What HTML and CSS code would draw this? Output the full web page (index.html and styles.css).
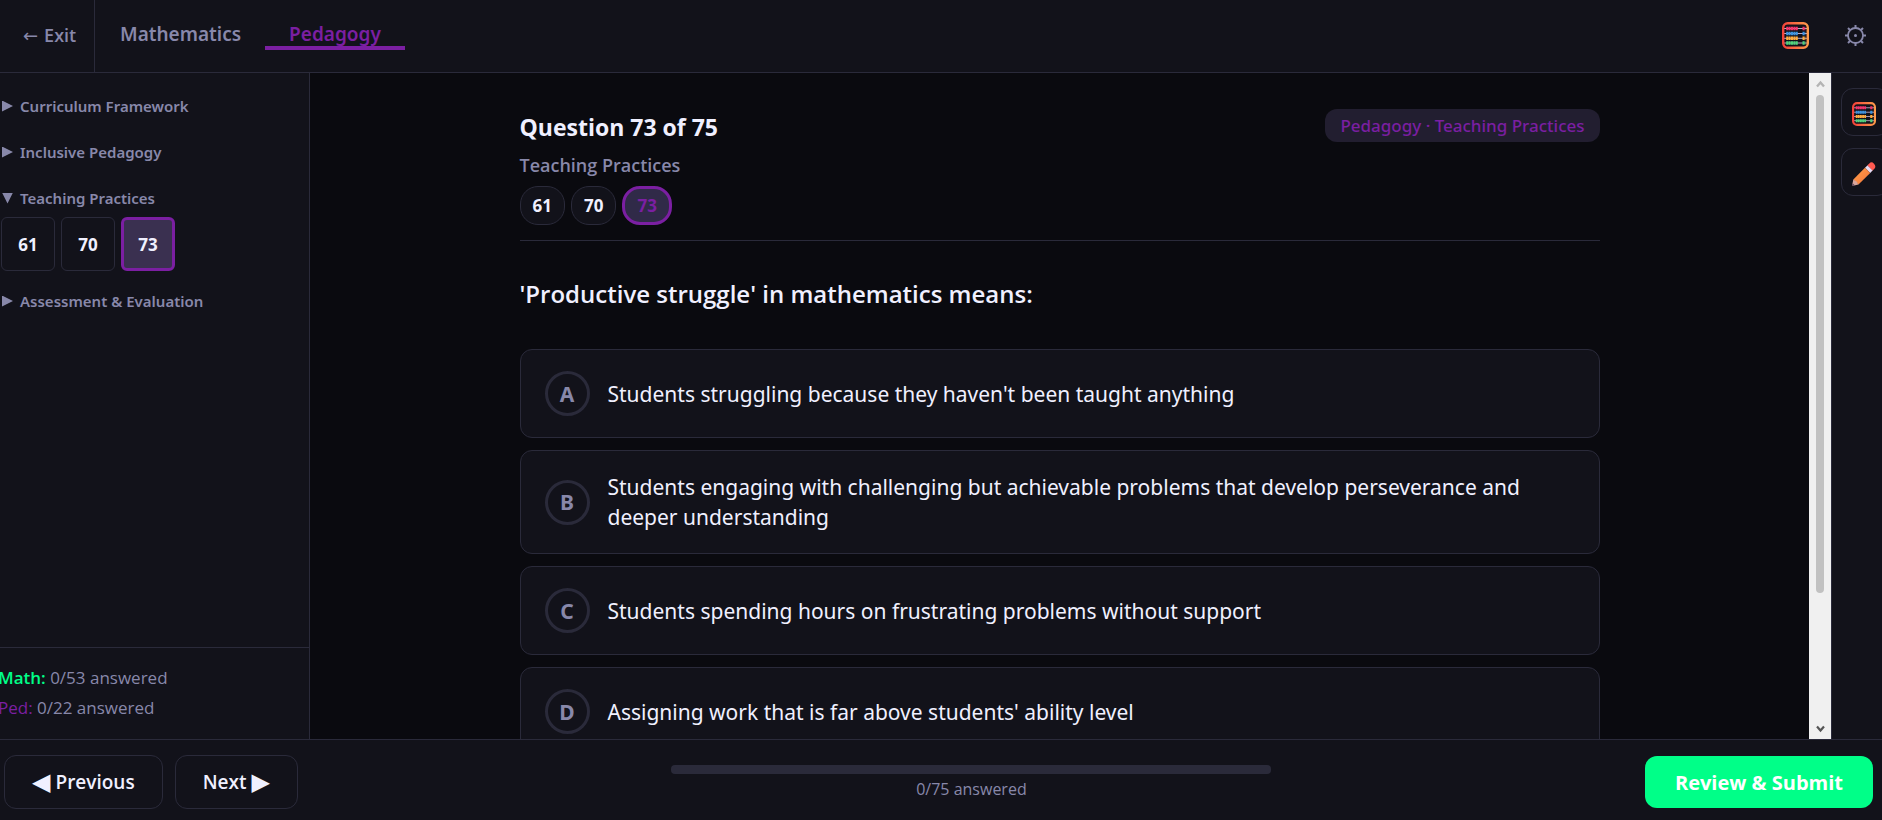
FILE: index.html
```html
<!DOCTYPE html>
<html lang="en">
<head>
    <meta charset="utf-8">
    <meta name="viewport" content="width=device-width, initial-scale=1">
    <title>Practice Test</title>
    <link rel="stylesheet" href="styles.css">
</head>
<body>
<svg class="defs" width="0" height="0" aria-hidden="true">
    <defs>
        <linearGradient id="frame" x1="0" y1="0" x2="1" y2="0">
            <stop offset="0" stop-color="#f4433a"/>
            <stop offset="1" stop-color="#ff9a4a"/>
        </linearGradient>
        <symbol id="abacus" viewBox="0 0 27 27">
            <path d="M2 6.5h23M2 11.5h23M2 16.3h23M2 21h23" stroke="#b9a9c4" stroke-width="1"/>
            <g fill="none" stroke-width="3.4" stroke-dasharray="2.1 .3">
                <path d="M4.2 6.5h11.6M20.5 6.5h2.8" stroke="#f5326b"/>
                <path d="M4.2 11.5h11.6M20.5 11.5h2.8" stroke="#3a94e0"/>
                <path d="M4.2 16.3h11.6M20.5 16.3h2.8" stroke="#ffae3d"/>
                <path d="M4.2 21h11.6M20.5 21h2.8" stroke="#4fd67c"/>
            </g>
            <rect x="1.2" y="1.2" width="24.6" height="24.6" rx="4.5" fill="none" stroke="url(#frame)" stroke-width="2.4"/>
        </symbol>
    </defs>
</svg>

<header class="top-bar">
    <a class="exit" href="#"><span class="back-arrow">←</span> Exit</a>
    <nav class="tabs">
        <a class="tab" href="#">Mathematics</a>
        <a class="tab active" href="#">Pedagogy</a>
    </nav>
    <div class="top-icons">
        <button class="icon-btn" aria-label="Calculator">
            <svg width="27" height="27"><use href="#abacus"/></svg>
        </button>
        <button class="icon-btn" aria-label="Settings">
            <svg width="21" height="21" viewBox="0 0 21 21" fill="none" stroke="#8888aa">
                <circle cx="10.5" cy="10.5" r="7.5" stroke-width="1.8"/>
                <circle cx="10.5" cy="10.5" r="1.5" fill="#8888aa" stroke="none"/>
                <path d="M10.5 0v3M10.5 18v3M0 10.5h3M18 10.5h3M3 3l2.2 2.2M15.8 15.8L18 18M18 3l-2.2 2.2M5.2 15.8L3 18" stroke-width="2"/>
            </svg>
        </button>
    </div>
</header>

<div class="workspace">
    <aside class="sidebar">
        <div class="topics">
            <details>
                <summary>Curriculum Framework</summary>
            </details>
            <details>
                <summary>Inclusive Pedagogy</summary>
            </details>
            <details open>
                <summary>Teaching Practices</summary>
                <div class="question-grid">
                    <button class="question-btn">61</button>
                    <button class="question-btn">70</button>
                    <button class="question-btn current">73</button>
                </div>
            </details>
            <details>
                <summary>Assessment &amp; Evaluation</summary>
            </details>
        </div>
        <div class="summary">
            <div><span class="math">Math:</span> 0/53 answered</div>
            <div><span class="ped">Ped:</span> 0/22 answered</div>
        </div>
    </aside>

    <main class="main">
        <div class="content">
            <div class="question-header">
                <div>
                    <h1>Question 73 of 75</h1>
                    <div class="topic-name">Teaching Practices</div>
                    <div class="chips">
                        <button class="chip">61</button>
                        <button class="chip">70</button>
                        <button class="chip current">73</button>
                    </div>
                </div>
                <span class="badge">Pedagogy · Teaching Practices</span>
            </div>

            <h2>'Productive struggle' in mathematics means:</h2>

            <div class="options">
                <button class="option">
                    <span class="letter">A</span>
                    <span>Students struggling because they haven't been taught anything</span>
                </button>
                <button class="option">
                    <span class="letter">B</span>
                    <span>Students engaging with challenging but achievable problems that develop perseverance and deeper understanding</span>
                </button>
                <button class="option">
                    <span class="letter">C</span>
                    <span>Students spending hours on frustrating problems without support</span>
                </button>
                <button class="option">
                    <span class="letter">D</span>
                    <span>Assigning work that is far above students' ability level</span>
                </button>
            </div>
        </div>
    </main>

    <div class="scrollbar" aria-hidden="true">
        <svg width="22" height="22" viewBox="0 0 22 22" fill="none" stroke="#b4b4b4" stroke-width="2.4"><path d="M8 13.5l3.5-4 3.5 4"/></svg>
        <div class="track"><div class="thumb"></div></div>
        <svg width="22" height="22" viewBox="0 0 22 22" fill="none" stroke="#555" stroke-width="2.2"><path d="M8 9.5l3.5 4 3.5-4"/></svg>
    </div>

    <aside class="tools">
        <button class="tool-btn" aria-label="Calculator">
            <svg width="24" height="24"><use href="#abacus"/></svg>
        </button>
        <button class="tool-btn" aria-label="Scratchpad">
            <svg width="24" height="24" viewBox="0 0 24 24">
                <defs>
                    <linearGradient id="wood" x1="0" y1="0" x2="1" y2="1">
                        <stop offset="0" stop-color="#ffa04a"/>
                        <stop offset="1" stop-color="#f4733a"/>
                    </linearGradient>
                </defs>
                <path d="M17.3 1.5q2.2-2.4 4.7.2t.4 5l-2 2-5.2-5.2z" fill="#ff5a50"/>
                <path d="M15.4 3.4l5.2 5.2-2.4 2.4L13 5.8z" fill="#e6dcf5"/>
                <path d="M13 5.8l5.2 5.2L6.5 22.6l-5.2-5.2z" fill="url(#wood)"/>
                <path d="M1.3 17.4L.2 23q0 .8.8.7l5.5-1.1-2-3z" fill="#d9a59a"/>
                <path d="M.6 21.2L.2 23q0 .8.8.7l1.8-.4z" fill="#5a4660"/>
            </svg>
        </button>
    </aside>
</div>

<footer class="bottom-bar">
    <div class="nav-buttons">
        <button class="nav-btn"><span class="arrow">◀</span>Previous</button>
        <button class="nav-btn">Next<span class="arrow">▶</span></button>
    </div>
    <div class="progress">
        <progress id="answered" value="0" max="75"></progress>
        <label for="answered">0/75 answered</label>
    </div>
    <button class="submit-btn">Review &amp; Submit</button>
</footer>
</body>
</html>
```
FILE: styles.css
```css
* {
    box-sizing: border-box;
}

body {
    margin: 0;
    height: 100vh;
    display: flex;
    flex-direction: column;
    overflow: hidden;
    background: #0a0a0f;
    color: #f0f0ff;
    font-family: "Open Sans", "Noto Sans", sans-serif;
    font-size: 17px;
}

button {
    font-family: inherit;
    color: inherit;
    background: none;
    border: none;
    padding: 0;
    cursor: pointer;
}

a {
    text-decoration: none;
}

svg {
    display: block;
}

.defs {
    position: absolute;
}

/* top bar */

.top-bar {
    display: flex;
    align-items: center;
    flex-shrink: 0;
    height: 73px;
    background: #12121a;
    border-bottom: 1px solid #2a2a3a;
    color: #8888aa;
}

.exit {
    display: flex;
    align-items: center;
    align-self: stretch;
    gap: 6px;
    width: 95px;
    padding: 0 0 2px 23px;
    border-right: 1px solid #2a2a3a;
    color: #8888aa;
    font-size: 18px;
    font-weight: 600;
    white-space: nowrap;
}

.back-arrow {
    font-family: "DejaVu Sans", sans-serif;
    font-weight: 400;
}

.tabs {
    display: flex;
    margin-left: 1px;
}

.tab {
    padding: 0 24px;
    border-bottom: 4px solid transparent;
    color: #8888aa;
    font-family: "Noto Sans", sans-serif;
    font-size: 19px;
    font-weight: 600;
    line-height: 24px;
}

.tab.active {
    color: #7b1fa2;
    border-bottom-color: #7b1fa2;
}

.top-icons {
    display: flex;
    gap: 12px;
    margin-left: auto;
    padding: 0 3px 2px 0;
}

.icon-btn {
    display: flex;
    align-items: center;
    justify-content: center;
    width: 48px;
    height: 48px;
}

/* workspace */

.workspace {
    display: flex;
    flex: 1;
    min-height: 0;
}

.sidebar {
    display: flex;
    flex-direction: column;
    flex-shrink: 0;
    width: 310px;
    background: #12121a;
    border-right: 1px solid #2a2a3a;
    color: #8888aa;
}

.topics {
    flex: 1;
    padding-top: 10px;
}

summary {
    display: flex;
    align-items: center;
    gap: 7px;
    padding-left: 2px;
    height: 46px;
    font-family: "Noto Sans", sans-serif;
    font-size: 15px;
    font-weight: 600;
    cursor: pointer;
}

summary::before {
    content: "";
    width: 11px;
    height: 11px;
    background: #8888aa;
    clip-path: polygon(0 0, 100% 50%, 0 100%);
}

details[open] summary::before {
    clip-path: polygon(0 0, 100% 0, 50% 100%);
}

details[open] summary {
    height: 42px;
    padding-top: 4px;
}

.question-grid {
    display: flex;
    gap: 6px;
    padding: 0 0 7px 1px;
}

.question-btn {
    width: 54px;
    height: 54px;
    border: 1px solid #2a2a3a;
    border-radius: 6px;
    color: #f0f0ff;
    font-size: 17px;
    font-weight: 700;
}

.question-btn.current {
    background: #3a3050;
    border: 3px solid #7b1fa2;
}

.summary {
    margin-left: -2px;
    padding: 15px 0 16px;
    border-top: 1px solid #2a2a3a;
    line-height: 30px;
}

.math {
    color: #00ff88;
    font-weight: 600;
}

.ped {
    color: #7b1fa2;
}

/* question */

.main {
    flex: 1;
    min-width: 0;
    overflow: hidden;
}

.content {
    max-width: 1080px;
    margin: 0 auto;
    padding-top: 36px;
}

.question-header {
    display: flex;
    justify-content: space-between;
    align-items: flex-start;
    padding-bottom: 15px;
    border-bottom: 1px solid #2a2a3a;
}

h1 {
    margin: 0 0 2px;
    font-size: 23px;
    font-weight: 700;
    line-height: 36px;
}

.topic-name {
    color: #8888aa;
    font-size: 18px;
    font-weight: 600;
    line-height: 36px;
}

.chips {
    display: flex;
    gap: 6px;
    margin-top: 3px;
}

.chip {
    height: 39px;
    padding: 0 12px;
    background: #12121a;
    border: 1px solid #2a2a3a;
    border-radius: 18px;
    font-size: 17px;
    font-weight: 700;
}

.chip.current {
    background: #302a48;
    border: 3px solid #7b1fa2;
    color: #7b1fa2;
}

.badge {
    padding: 0 15px;
    background: #221e30;
    border-radius: 12px;
    color: #7b1fa2;
    font-family: "Noto Sans", sans-serif;
    font-size: 17px;
    font-weight: 500;
    line-height: 33px;
}

h2 {
    margin: 35px 0 37px;
    font-size: 24px;
    font-weight: 600;
    line-height: 36px;
}

.options {
    display: flex;
    flex-direction: column;
    gap: 12px;
}

.option {
    display: flex;
    align-items: center;
    gap: 18px;
    padding: 21px 24px;
    background: #12121a;
    border: 1px solid #2a2a3a;
    border-radius: 12px;
    font-family: "Noto Sans", sans-serif;
    font-size: 21px;
    line-height: 30px;
    text-align: left;
}

.letter {
    display: flex;
    align-items: center;
    justify-content: center;
    flex-shrink: 0;
    width: 45px;
    height: 45px;
    border: 3px solid #2a2a3a;
    border-radius: 50%;
    color: #8888aa;
    font-weight: 700;
}

/* scrollbar */

.scrollbar {
    display: flex;
    flex-direction: column;
    flex-shrink: 0;
    width: 22px;
    background: #f0f0f0;
}

.track {
    flex: 1;
}

.thumb {
    width: 8px;
    height: 80%;
    margin: 0 auto;
    background: #c1c1c1;
    border-radius: 4px;
}

/* right tools */

.tools {
    display: flex;
    flex-direction: column;
    gap: 12px;
    flex-shrink: 0;
    width: 51px;
    padding: 15px 0 0 9px;
    overflow: hidden;
    background: #12121a;
    border-left: 1px solid #2a2a3a;
}

.tool-btn {
    width: 48px;
    height: 48px;
    padding: 3px 0 0 10px;
    border: 1px solid #2a2a3a;
    border-radius: 12px;
}

/* bottom bar */

.bottom-bar {
    display: flex;
    align-items: center;
    justify-content: space-between;
    flex-shrink: 0;
    height: 81px;
    padding: 4px 9px 0 4px;
    background: #12121a;
    border-top: 1px solid #2a2a3a;
}

.nav-buttons {
    display: flex;
    gap: 12px;
}

.nav-btn {
    display: flex;
    align-items: center;
    gap: 5px;
    height: 54px;
    padding: 0 27px;
    border: 1px solid #2a2a3a;
    border-radius: 12px;
    font-size: 19px;
    font-weight: 600;
}

.arrow {
    font-family: "DejaVu Sans", sans-serif;
    font-size: 24px;
    font-weight: 400;
    line-height: 24px;
}

.progress {
    display: flex;
    flex-direction: column;
    gap: 4px;
    width: 600px;
    color: #8888aa;
    font-size: 16px;
    font-weight: 500;
    line-height: 22px;
    text-align: center;
}

progress {
    display: block;
    width: 100%;
    height: 9px;
    appearance: none;
    border: none;
}

progress::-webkit-progress-bar {
    background: #2a2a3a;
    border-radius: 4px;
}

progress::-webkit-progress-value {
    background: #00ff88;
    border-radius: 4px;
}

.submit-btn {
    height: 52px;
    padding: 0 30px;
    background: #00ff88;
    border-radius: 12px;
    color: #fff;
    font-size: 20px;
    font-weight: 700;
}
```
